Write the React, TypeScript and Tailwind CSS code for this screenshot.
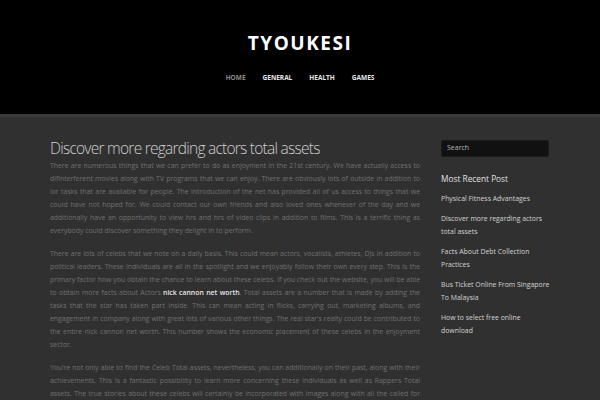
import React from "react";

const posts = [
  "Physical Fitness Advantages",
  "Discover more regarding actors total assets",
  "Facts About Debt Collection Practices",
  "Bus Ticket Online From Singapore To Malaysia",
  "How to select free online download",
];

const nav = ["HOME", "GENERAL", "HEALTH", "GAMES"];

export default function App() {
  return (
    <div className="w-[600px] h-[400px] overflow-hidden bg-[#303030]" style={{ fontFamily: '"Open Sans", sans-serif' }}>
      {/* Header */}
      <header className="h-[114px] bg-black flex flex-col items-center pt-[33px]">
        <h1 className="text-[19px] leading-[20px] font-bold text-white tracking-[1.5px]">TYOUKESI</h1>
        <nav className="mt-[20px] flex gap-[17px] text-[6.5px] font-bold leading-[10px]">
          {nav.map((n, i) => (
            <span key={n} className={i === 0 ? "text-[#8a8a8a]" : "text-[#e8e8e8]"}>{n}</span>
          ))}
        </nav>
      </header>
      <div className="h-[3px] bg-[#3a3a3a]" />

      {/* Body */}
      <div className="flex px-[50px] gap-[21px]">
        <main className="w-[370px] shrink-0 pt-[20px]">
          <h2 className="text-[15.5px] leading-[22px] font-light text-[#cfcfcf] tracking-[-0.75px]">Discover more regarding actors total assets</h2>
          <div className="text-[6.88px] leading-[13px] text-[#707070] text-justify">
            <p className="mb-[10px]">
              There are numerous things that we can prefer to do as enjoyment in the 21st century. We have actually access to difinterferent movies along with TV programs that we can enjoy. There are obviously lots of outside in addition to ior tasks that are available for people. The introduction of the net has provided all of us access to things that we could have not hoped for. We could contact our own friends and also loved ones whenever of the day and we additionally have an opportunity to view hrs and hrs of video clips in addition to films. This is a terrific thing as everybody could discover something they delight in to perform.
            </p>
            <p className="mb-[10px]">
              There are lots of celebs that we note on a daily basis. This could mean actors, vocalists, athletes, DJs in addition to political leaders. These individuals are all in the spotlight and we enjoyably follow their own every step. This is the primary factor how you obtain the chance to learn about these celebs. If you check out the website, you will be able to obtain more facts about Actors <span className="text-[#e6e6e6] font-semibold">nick cannon net worth</span>. Total assets are a number that is made by adding the tasks that the star has taken part inside. This can mean acting in flicks, carrying out, marketing albums, and engagement in company along with great lots of various other things. The real star's realty could be contributed to the entire nick cannon net worth. This number shows the economic placement of these celebs in the enjoyment sector.
            </p>
            <p>
              You're not only able to find the Celeb Total assets, nevertheless, you can additionally on their past, along with their achievements. This is a fantastic possibility to learn more concerning these individuals as well as Rappers Total assets. The true stories about these celebs will certainly be incorporated with images along with all the called for information.
            </p>
          </div>
        </main>

        <aside className="w-[116px] shrink-0 pt-[23px]">
          <div className="w-[108px] h-[17px] bg-[#111111] rounded-[2px] border border-[#1c1c1c] flex items-center px-[5px] text-[7px] text-[#b5b5b5]">
            Search
          </div>
          <h3 className="mt-[16px] text-[8.3px] leading-[12px] text-[#e0e0e0]">Most Recent Post</h3>
          <ul className="mt-[7px] flex flex-col gap-[7px] w-[112px]">
            {posts.map((p) => (
              <li key={p} className="text-[6.9px] leading-[13px] text-[#d4d4d4]">{p}</li>
            ))}
          </ul>
        </aside>
      </div>
    </div>
  );
}
